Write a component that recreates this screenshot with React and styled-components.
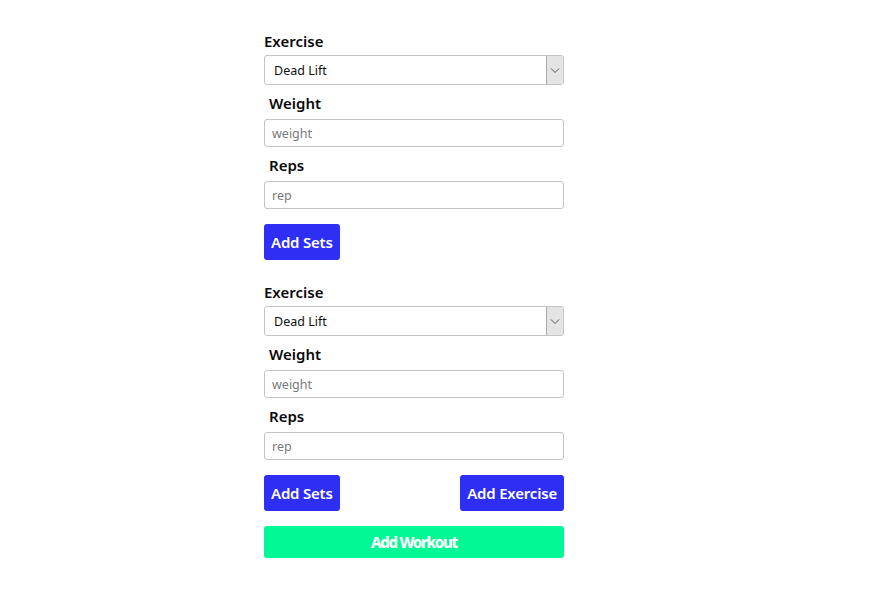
import React from 'react';
import styled, { createGlobalStyle } from 'styled-components';

const GlobalStyle = createGlobalStyle`
  body {
    margin: 0;
    background: #fff;
    font-family: "Noto Sans", "Open Sans", sans-serif;
  }
`;

const Page = styled.div`
  display: flex;
  justify-content: flex-start;
  padding: 31px 0 0 264px;
`;

const Form = styled.div`
  width: 300px;
  display: flex;
  flex-direction: column;
`;

const Block = styled.div`
  display: flex;
  flex-direction: column;
  margin-bottom: ${(p) => p.gap || 0}px;
`;

const Label = styled.label`
  font-size: 15px;
  font-weight: 600;
  line-height: 20px;
  color: #0a0a0a;
  padding-left: ${(p) => (p.indent ? 5 : 0)}px;
  margin-top: ${(p) => p.top || 0}px;
  margin-bottom: ${(p) => p.bottom || 6}px;
`;

const SelectWrap = styled.div`
  position: relative;
  height: 30px;
`;

const Select = styled.select`
  appearance: none;
  width: 100%;
  height: 30px;
  box-sizing: border-box;
  border: 1px solid #c4c4c4;
  border-radius: 3px;
  background: #fff;
  padding: 0 0 0 9px;
  font-family: "Noto Sans", sans-serif;
  font-size: 12.5px;
  color: #111;
  outline: none;
`;

const ArrowBox = styled.div`
  position: absolute;
  top: 1px;
  right: 1px;
  width: 16px;
  height: 28px;
  background: #e4e4e4;
  border-left: 1px solid #aaa;
  border-radius: 0 2px 2px 0;
  display: flex;
  align-items: center;
  justify-content: center;
  pointer-events: none;
`;

const Input = styled.input`
  width: 100%;
  height: 28px;
  box-sizing: border-box;
  border: 1px solid #c4c4c4;
  border-radius: 3px;
  padding: 0 7px;
  font-family: "Noto Sans", sans-serif;
  font-size: 12.5px;
  outline: none;
  &::placeholder {
    color: #7a7a7a;
  }
`;

const Row = styled.div`
  display: flex;
  justify-content: space-between;
  margin-top: 15px;
`;

const Button = styled.button`
  height: 36px;
  padding: 0 7px;
  border: none;
  border-radius: 3px;
  background: #2e2ef5;
  color: #fff;
  font-family: "Noto Sans", sans-serif;
  font-size: 15px;
  font-weight: 600;
  letter-spacing: -0.2px;
  cursor: pointer;
`;

const WorkoutButton = styled.button`
  margin-top: 15px;
  height: 32px;
  width: 100%;
  border: none;
  border-radius: 3px;
  background: #00f995;
  color: #fff;
  font-family: "Noto Sans", sans-serif;
  font-size: 15px;
  font-weight: 800;
  letter-spacing: -1.3px;
  cursor: pointer;
`;

const Chevron = () => (
  <svg width="10" height="7" viewBox="0 0 10 7">
    <path d="M1 1.5 L5 5.5 L9 1.5" fill="none" stroke="#555" strokeWidth="1" />
  </svg>
);

const ExerciseBlock = ({ last }) => (
  <Block>
    <Label bottom={4}>Exercise</Label>
    <SelectWrap>
      <Select defaultValue="Dead Lift">
        <option>Dead Lift</option>
        <option>Squat</option>
        <option>Bench Press</option>
      </Select>
      <ArrowBox>
        <Chevron />
      </ArrowBox>
    </SelectWrap>
    <Label indent top={8}>Weight</Label>
    <Input placeholder="weight" />
    <Label indent top={8}>Reps</Label>
    <Input placeholder="rep" />
    <Row>
      <Button>Add Sets</Button>
      {last && <Button>Add Exercise</Button>}
    </Row>
  </Block>
);

const App = () => (
  <>
    <GlobalStyle />
    <Page>
      <Form>
        <Block gap={22}>
          <ExerciseBlock />
        </Block>
        <ExerciseBlock last />
        <WorkoutButton>Add Workout</WorkoutButton>
      </Form>
    </Page>
  </>
);

export default App;
